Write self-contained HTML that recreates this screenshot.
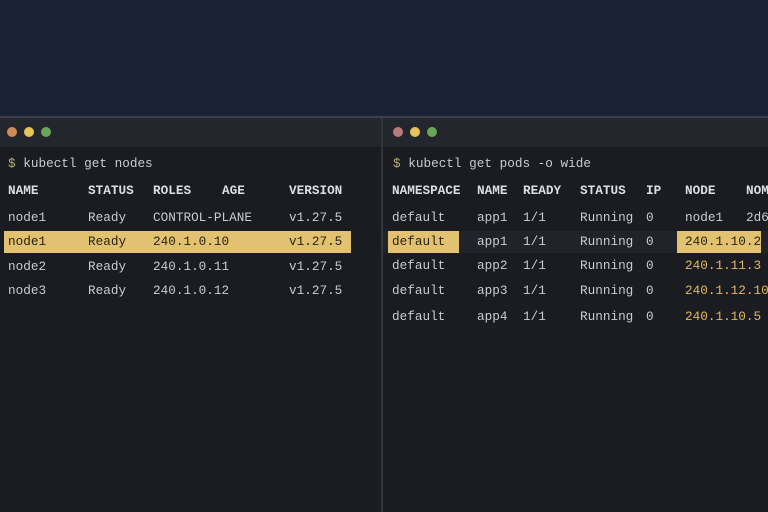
<!DOCTYPE html><html><head><style>
body{margin:0;width:768px;height:512px;overflow:hidden;background:#1c2235;font-family:"Liberation Mono",monospace;font-size:12.7px;position:relative}
.p{position:absolute;top:118px;height:394px;background:#1b1c21}
.tb{position:absolute;left:0;right:0;top:0;height:29px;background:#24262d}
.d{position:absolute;top:127px;width:10px;height:10px;border-radius:50%}
.t{position:absolute;color:#c9cbd0;white-space:pre;line-height:16px;margin-top:1px}
.h{font-weight:600;color:#dcdee2}
.y{color:#e0b860}
.k{color:#2b2210}
.hl{position:absolute;background:#e2c170}
</style></head><body>
<div style="position:absolute;left:0;top:116px;width:768px;height:2px;background:#3a3e4e"></div>
<div class="p" style="left:0;width:381px"><div class="tb"></div></div>
<div style="position:absolute;left:381px;top:118px;width:2px;height:394px;background:#33353d"></div>
<div class="p" style="left:383px;width:385px"><div class="tb"></div></div>
<div class="d" style="left:7px;background:#d08a58"></div>
<div class="d" style="left:24px;background:#e6c45a"></div>
<div class="d" style="left:41px;background:#6aa65a"></div>
<div class="d" style="left:393px;background:#b97a7c"></div>
<div class="d" style="left:410px;background:#e6c45a"></div>
<div class="d" style="left:427px;background:#6aa65a"></div>
<div class="hl" style="left:4px;top:231px;width:347px;height:22px"></div>
<div style="position:absolute;left:383px;top:231px;width:385px;height:22px;background:#222328"></div>
<div class="hl" style="left:388px;top:231px;width:71px;height:22px"></div>
<div class="hl" style="left:677px;top:231px;width:84px;height:22px"></div>

<div class="t" style="left:8px;top:155px"><span style="color:#b8b070">$</span> kubectl get nodes</div>
<div class="t h" style="left:8px;top:182px">NAME</div><div class="t h" style="left:88px;top:182px">STATUS</div><div class="t h" style="left:153px;top:182px">ROLES</div><div class="t h" style="left:222px;top:182px">AGE</div><div class="t h" style="left:289px;top:182px">VERSION</div>
<div class="t" style="left:8px;top:209px">node1</div><div class="t" style="left:88px;top:209px">Ready</div><div class="t" style="left:153px;top:209px">CONTROL-PLANE</div><div class="t" style="left:289px;top:209px">v1.27.5</div>
<div class="t k" style="left:8px;top:233px">node1</div><div class="t k" style="left:88px;top:233px">Ready</div><div class="t k" style="left:153px;top:233px">240.1.0.10</div><div class="t k" style="left:289px;top:233px">v1.27.5</div>
<div class="t" style="left:8px;top:258px">node2</div><div class="t" style="left:88px;top:258px">Ready</div><div class="t" style="left:153px;top:258px">240.1.0.11</div><div class="t" style="left:289px;top:258px">v1.27.5</div>
<div class="t" style="left:8px;top:282px">node3</div><div class="t" style="left:88px;top:282px">Ready</div><div class="t" style="left:153px;top:282px">240.1.0.12</div><div class="t" style="left:289px;top:282px">v1.27.5</div>

<div class="t" style="left:393px;top:155px"><span style="color:#b8b070">$</span> kubectl get pods -o wide</div>
<div class="t h" style="left:392px;top:182px">NAMESPACE</div><div class="t h" style="left:477px;top:182px">NAME</div><div class="t h" style="left:523px;top:182px">READY</div><div class="t h" style="left:580px;top:182px">STATUS</div><div class="t h" style="left:646px;top:182px">IP</div><div class="t h" style="left:685px;top:182px">NODE</div><div class="t h" style="left:746px;top:182px">NOM</div>
<div class="t" style="left:392px;top:209px">default</div><div class="t" style="left:477px;top:209px">app1</div><div class="t" style="left:523px;top:209px">1/1</div><div class="t" style="left:580px;top:209px">Running</div><div class="t" style="left:646px;top:209px">0</div><div class="t" style="left:685px;top:209px">node1</div><div class="t" style="left:746px;top:209px">2d6</div>
<div class="t k" style="left:392px;top:233px">default</div><div class="t" style="left:477px;top:233px">app1</div><div class="t" style="left:523px;top:233px">1/1</div><div class="t" style="left:580px;top:233px">Running</div><div class="t" style="left:646px;top:233px">0</div><div class="t k" style="left:685px;top:233px">240.1.10.2</div>
<div class="t" style="left:392px;top:257px">default</div><div class="t" style="left:477px;top:257px">app2</div><div class="t" style="left:523px;top:257px">1/1</div><div class="t" style="left:580px;top:257px">Running</div><div class="t" style="left:646px;top:257px">0</div><div class="t y" style="left:685px;top:257px">240.1.11.3</div>
<div class="t" style="left:392px;top:282px">default</div><div class="t" style="left:477px;top:282px">app3</div><div class="t" style="left:523px;top:282px">1/1</div><div class="t" style="left:580px;top:282px">Running</div><div class="t" style="left:646px;top:282px">0</div><div class="t y" style="left:685px;top:282px">240.1.12.10</div>
<div class="t" style="left:392px;top:308px">default</div><div class="t" style="left:477px;top:308px">app4</div><div class="t" style="left:523px;top:308px">1/1</div><div class="t" style="left:580px;top:308px">Running</div><div class="t" style="left:646px;top:308px">0</div><div class="t y" style="left:685px;top:308px">240.1.10.5</div>
</body></html>
